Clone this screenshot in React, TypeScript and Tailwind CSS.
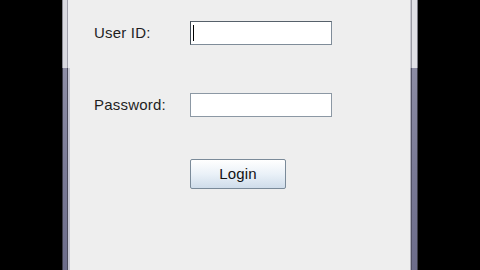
export default function App() {
  return (
    <div className="flex h-[270px] w-[480px] overflow-hidden bg-black font-['Liberation_Sans',Arial,sans-serif]">
      <div className="w-[62px] shrink-0 bg-black" />
      {/* left frame edge */}
      <div className="flex w-[8px] shrink-0 flex-col">
        <div className="flex h-[68px]">
          <div className="w-px bg-[#8a8a94]" />
          <div className="w-[4px] bg-[#d8d8e0]" />
          <div className="w-px bg-[#a0a0ac]" />
          <div className="w-[2px] bg-[#ececf0]" />
        </div>
        <div className="flex flex-1">
          <div className="w-px bg-[#3c3c48]" />
          <div className="w-[4px] bg-gradient-to-b from-[#8e8ea6] via-[#7a7a96] to-[#6c6c8a]" />
          <div className="w-px bg-[#4a4a5c]" />
          <div className="w-[2px] bg-[#c8c8d4]" />
        </div>
      </div>

      {/* content pane */}
      <div className="flex w-[340px] shrink-0 flex-col bg-[#eeeeee] pl-[24px] text-[15px] tracking-[0.2px] text-[#1e1e1e]">
        <div className="mt-[21px] flex h-[24px] items-center">
          <span className="w-[96px]">User ID:</span>
          <div className="relative h-[24px] w-[142px] border border-[#7f8c99] border-l-[#404a54] border-t-[#56606a] bg-white">
            <div className="absolute left-[2px] top-[3px] h-[16px] w-px bg-black" />
          </div>
        </div>
        <div className="mt-[48px] flex h-[24px] items-center">
          <span className="w-[96px]">Password:</span>
          <div className="h-[24px] w-[142px] border border-[#8c98a4] bg-white" />
        </div>
        <div className="mt-[42px] flex pl-[96px]">
          <button className="h-[30px] w-[96px] rounded-[2px] border border-[#7a8a99] bg-gradient-to-b from-[#ffffff] via-[#eaf1f8] to-[#cfdcea] text-[15px] text-[#111111]">
            Login
          </button>
        </div>
      </div>

      {/* right frame edge */}
      <div className="flex w-[8px] shrink-0 flex-col">
        <div className="flex h-[68px]">
          <div className="w-px bg-[#c8c8d0]" />
          <div className="w-px bg-[#9a9aa4]" />
          <div className="w-[5px] bg-[#e0e0e6]" />
          <div className="w-px bg-[#7a7a84]" />
        </div>
        <div className="flex flex-1">
          <div className="w-px bg-[#b0b0bc]" />
          <div className="w-px bg-[#505064]" />
          <div className="w-[5px] bg-gradient-to-b from-[#8c8ca4] via-[#7a7a96] to-[#6c6c8a]" />
          <div className="w-px bg-[#3c3c48]" />
        </div>
      </div>
      <div className="flex-1 bg-black" />
    </div>
  );
}
